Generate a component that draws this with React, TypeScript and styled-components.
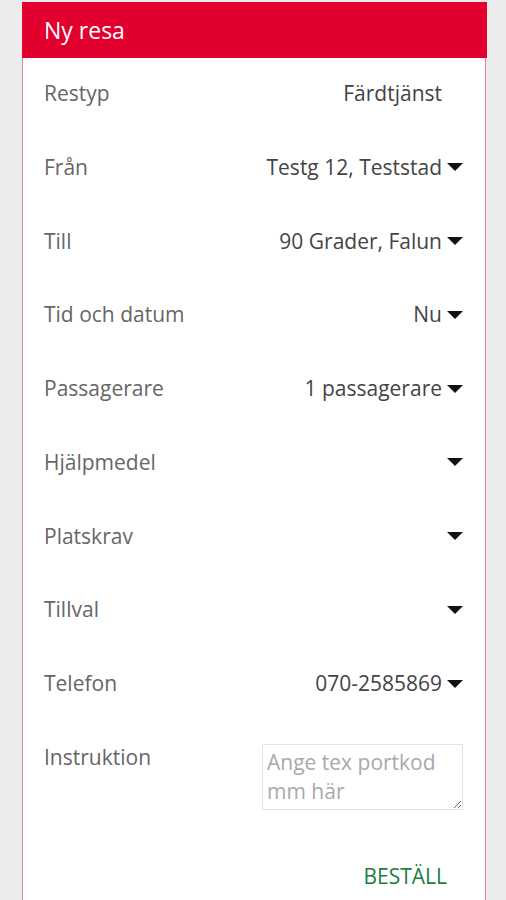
import styled, { createGlobalStyle } from "styled-components";

const GlobalStyle = createGlobalStyle`
  html, body {
    margin: 0;
    padding: 0;
    background: #ececec;
    font-family: "Open Sans", "Noto Sans", sans-serif;
  }
`;

const Page = styled.div`
  width: 506px;
  height: 900px;
  overflow: hidden;
  padding-top: 2px;
  box-sizing: border-box;
`;

const Card = styled.div`
  margin: 0 20px 0 22px;
  background: #fff;
  border: 1.5px solid #ea8890;
  border-top: none;
  min-height: 920px;
  box-sizing: border-box;
`;

const Header = styled.div`
  height: 56px;
  background: #e2002e;
  margin: 0 -1.5px;
  display: flex;
  align-items: center;
  padding-left: 22.5px;
  color: #fff;
  font-size: 23px;
`;

const Row = styled.div`
  height: 73.75px;
  box-sizing: border-box;
  padding: 21px 22px 0 21px;
  display: flex;
  justify-content: space-between;
  align-items: flex-start;
`;

const Label = styled.span`
  font-size: 21px;
  line-height: 28px;
  color: #666;
`;

const Value = styled.span<{ $plain?: boolean }>`
  display: flex;
  align-items: center;
  gap: 5px;
  min-height: 28px;
  font-size: 21px;
  line-height: 28px;
  color: #444;
  margin-right: ${({ $plain }) => ($plain ? "21px" : "0")};
`;

const Caret = styled.span`
  width: 0;
  height: 0;
  border-left: 8px solid transparent;
  border-right: 8px solid transparent;
  border-top: 8px solid #111;
  margin-top: 1px;
`;

const Note = styled.textarea`
  width: 201px;
  height: 66px;
  margin-top: 1px;
  box-sizing: border-box;
  border: 1px solid #e3e3e3;
  padding: 3px 4px;
  font-family: inherit;
  font-size: 21px;
  line-height: 29px;
  color: #333;
  resize: vertical;
  &::placeholder {
    color: #a9a9a9;
  }
`;

const Footer = styled.div`
  display: flex;
  justify-content: flex-end;
  padding: 66px 38px 0 0;
`;

const OrderButton = styled.button`
  background: none;
  border: none;
  padding: 0;
  font-family: inherit;
  font-size: 21px;
  color: #1e7e3e;
  cursor: pointer;
`;

const rows: { label: string; value: string; caret: boolean }[] = [
  { label: "Restyp", value: "Färdtjänst", caret: false },
  { label: "Från", value: "Testg 12, Teststad", caret: true },
  { label: "Till", value: "90 Grader, Falun", caret: true },
  { label: "Tid och datum", value: "Nu", caret: true },
  { label: "Passagerare", value: "1 passagerare", caret: true },
  { label: "Hjälpmedel", value: "", caret: true },
  { label: "Platskrav", value: "", caret: true },
  { label: "Tillval", value: "", caret: true },
  { label: "Telefon", value: "070-2585869", caret: true },
];

export default function App() {
  return (
    <Page>
      <GlobalStyle />
      <Card>
        <Header>Ny resa</Header>
        {rows.map((r) => (
          <Row key={r.label}>
            <Label>{r.label}</Label>
            <Value $plain={!r.caret}>
              {r.value}
              {r.caret && <Caret />}
            </Value>
          </Row>
        ))}
        <Row>
          <Label>Instruktion</Label>
          <Note placeholder="Ange tex portkod mm här" />
        </Row>
        <Footer>
          <OrderButton>BESTÄLL</OrderButton>
        </Footer>
      </Card>
    </Page>
  );
}
